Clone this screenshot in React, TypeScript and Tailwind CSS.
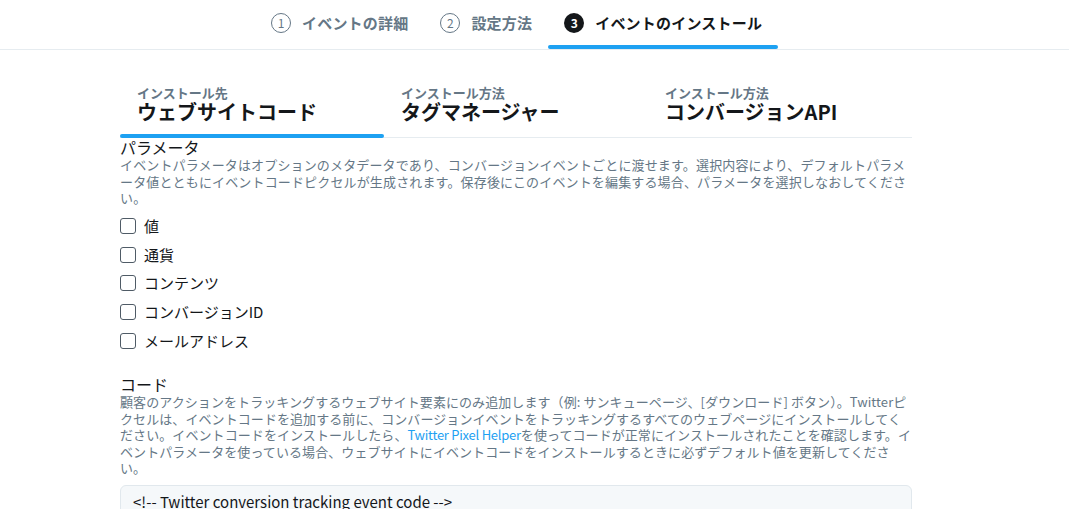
import React from "react";

const font = { fontFamily: '"Noto Sans CJK JP", "Noto Sans", sans-serif' };

const steps = [
  { n: "1", label: "イベントの詳細", active: false },
  { n: "2", label: "設定方法", active: false },
  { n: "3", label: "イベントのインストール", active: true },
];

const tabs = [
  { sub: "インストール先", title: "ウェブサイトコード", active: true },
  { sub: "インストール方法", title: "タグマネージャー", active: false },
  { sub: "インストール方法", title: "コンバージョンAPI", active: false },
];

const params = ["値", "通貨", "コンテンツ", "コンバージョンID", "メールアドレス"];

function StepBar() {
  return (
    <nav className="flex border-b border-[#e6ecf0] pl-[255px]">
      {steps.map((s) => (
        <div key={s.n} className="flex flex-col">
          <div className="flex h-[45px] items-center gap-[11px] px-4">
            {s.active ? (
              <span className="flex h-5 w-5 items-center justify-center rounded-full bg-[#14171a] text-[12px] font-bold leading-none text-white">
                {s.n}
              </span>
            ) : (
              <span className="flex h-5 w-5 items-center justify-center rounded-full border-[1.5px] border-[#657786] text-[12px] leading-none text-[#657786]">
                {s.n}
              </span>
            )}
            <span
              className={
                "text-[15px] font-bold leading-5 tracking-[0.2px] " +
                (s.active ? "text-[#14171a]" : "text-[#657786]")
              }
            >
              {s.label}
            </span>
          </div>
          <div className={"h-1 rounded-full " + (s.active ? "bg-[#1da1f2]" : "bg-transparent")} />
        </div>
      ))}
    </nav>
  );
}

function InstallTabs() {
  return (
    <div className="flex border-b border-[#e6ecf0]">
      {tabs.map((t) => (
        <div key={t.title} className="flex w-[264px] flex-col">
          <div className="px-[17px] pt-[9px] pb-[11px]">
            <div className="text-[13px] font-bold leading-4 text-[#657786]">{t.sub}</div>
            <div className="text-[20px] font-bold leading-[22px] text-[#14171a]">{t.title}</div>
          </div>
          <div className={"-mb-px h-1 rounded-full " + (t.active ? "bg-[#1da1f2]" : "bg-transparent")} />
        </div>
      ))}
    </div>
  );
}

export default function App() {
  return (
    <div className="min-h-screen bg-white text-[#14171a]" style={font}>
      <StepBar />
      <main className="ml-[120px] w-[792px] pt-[26px]">
        <InstallTabs />

        <section>
          <h2 className="text-[16px] leading-[19px] text-[#14171a]">パラメータ</h2>
          <p className="text-[13px] leading-[16.5px] tracking-[0.15px] text-[#657786]">
            イベントパラメータはオプションのメタデータであり、コンバージョンイベントごとに渡せます。選択内容により、デフォルトパラメータ値とともにイベントコードピクセルが生成されます。保存後にこのイベントを編集する場合、パラメータを選択しなおしてください。
          </p>
          <ul className="mt-[5px] flex flex-col">
            {params.map((p) => (
              <li key={p} className="flex h-[28.75px] items-center gap-[8px]">
                <span className="h-4 w-4 rounded-[3px] border-[1.5px] border-[#4f5b66]" />
                <span className="text-[15px] leading-5">{p}</span>
              </li>
            ))}
          </ul>
        </section>

        <section className="mt-5">
          <h2 className="text-[16px] leading-[19px] text-[#14171a]">コード</h2>
          <p className="text-[13px] leading-[16.5px] tracking-[0.08px] text-[#657786]">
            顧客のアクションをトラッキングするウェブサイト要素にのみ追加します（例: サンキューページ、[ダウンロード] ボタン）。Twitterピクセルは、イベントコードを追加する前に、コンバージョンイベントをトラッキングするすべてのウェブページにインストールしてください。イベントコードをインストールしたら、
            <a className="tracking-[-0.25px] text-[#1da1f2]">Twitter Pixel Helper</a>
            を使ってコードが正常にインストールされたことを確認します。イベントパラメータを使っている場合、ウェブサイトにイベントコードをインストールするときに必ずデフォルト値を更新してください。
          </p>
          <div className="mt-2 rounded-md border border-[#e1e8ed] bg-[#f5f8fa] px-3 pt-[6px] pb-4">
            <div className="text-[15px] leading-5 text-[#14171a]">{"<!-- Twitter conversion tracking event code -->"}</div>
          </div>
        </section>
      </main>
    </div>
  );
}
